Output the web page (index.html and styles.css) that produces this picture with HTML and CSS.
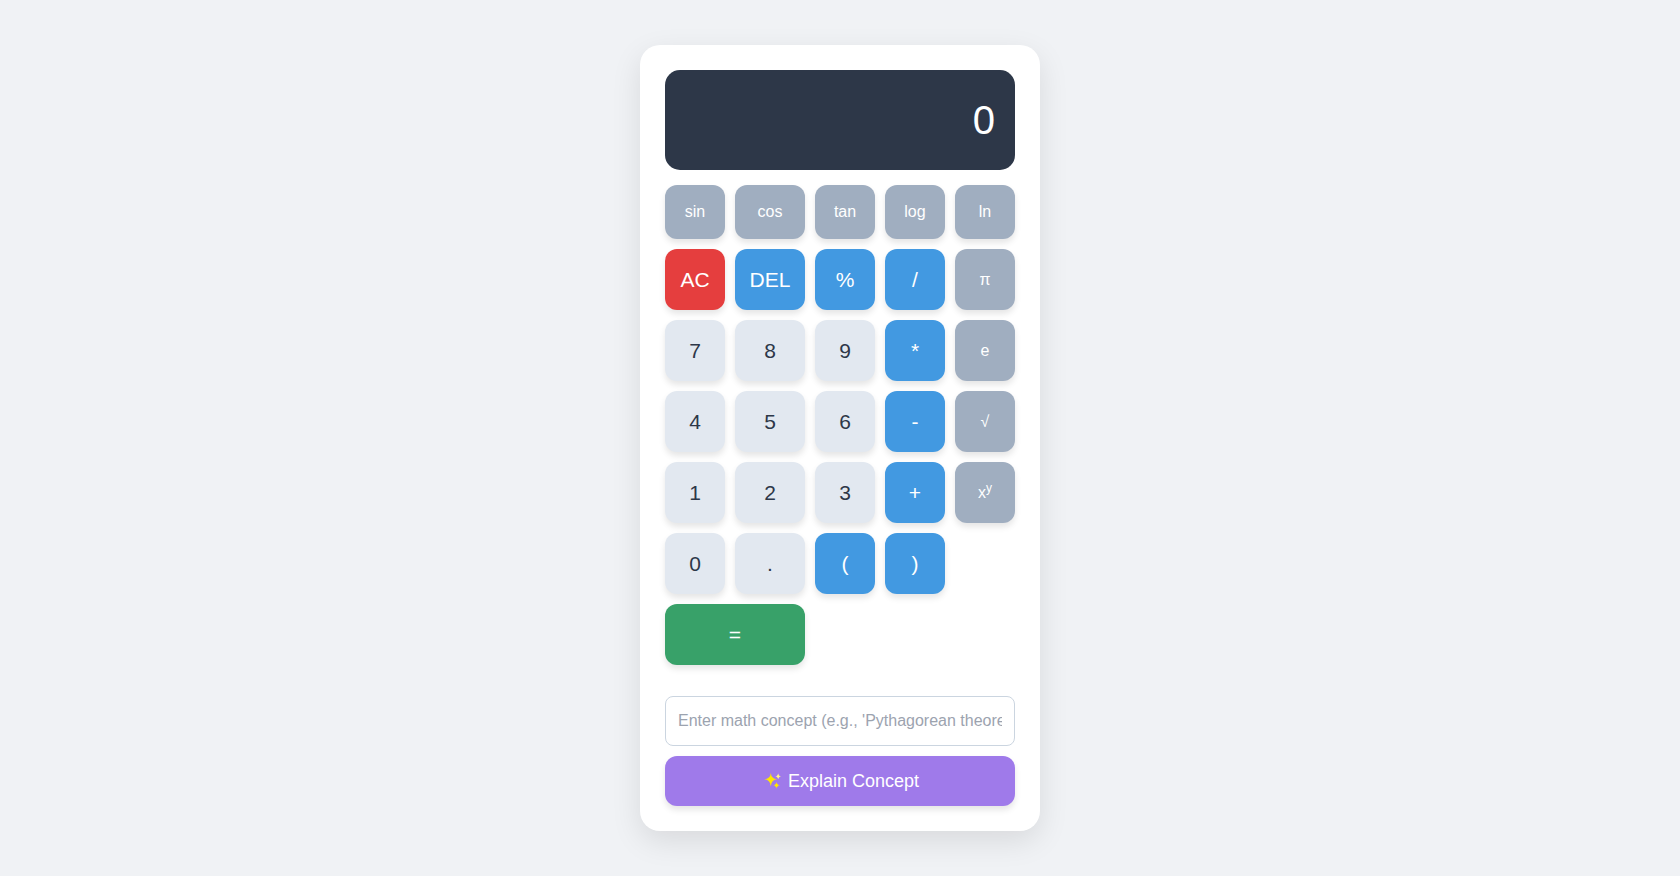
FILE: index.html
```html
<!DOCTYPE html>
<html lang="en">
<head>
<meta charset="utf-8">
<meta name="viewport" content="width=device-width, initial-scale=1">
<title>Scientific Calculator</title>
<link rel="stylesheet" href="styles.css">
</head>
<body>
<main class="calculator">
  <output class="display" aria-label="Result">0</output>
  <div class="keys">
    <button type="button" class="key function">sin</button>
    <button type="button" class="key function">cos</button>
    <button type="button" class="key function">tan</button>
    <button type="button" class="key function">log</button>
    <button type="button" class="key function">ln</button>

    <button type="button" class="key clear">AC</button>
    <button type="button" class="key operator">DEL</button>
    <button type="button" class="key operator">%</button>
    <button type="button" class="key operator">/</button>
    <button type="button" class="key function">π</button>

    <button type="button" class="key">7</button>
    <button type="button" class="key">8</button>
    <button type="button" class="key">9</button>
    <button type="button" class="key operator">*</button>
    <button type="button" class="key function">e</button>

    <button type="button" class="key">4</button>
    <button type="button" class="key">5</button>
    <button type="button" class="key">6</button>
    <button type="button" class="key operator">-</button>
    <button type="button" class="key function">√</button>

    <button type="button" class="key">1</button>
    <button type="button" class="key">2</button>
    <button type="button" class="key">3</button>
    <button type="button" class="key operator">+</button>
    <button type="button" class="key function">x<sup>y</sup></button>

    <button type="button" class="key">0</button>
    <button type="button" class="key">.</button>
    <button type="button" class="key operator">(</button>
    <button type="button" class="key operator">)</button>

    <button type="button" class="key equals">=</button>
  </div>
  <form class="explain">
    <input class="concept" type="text" aria-label="Math concept" placeholder="Enter math concept (e.g., 'Pythagorean theorem')">
    <button type="button" class="explain-button">
      <svg class="sparkles" viewBox="0 0 22 18" aria-hidden="true">
        <path fill="#ffe600" d="M9.8 1 Q10.3 6.8 16.2 7.3 Q10.3 7.8 9.8 14.2 Q9.3 7.8 3.2 7.3 Q9.3 6.8 9.8 1Z"/>
        <circle fill="#ffe600" cx="9.8" cy="7.3" r="2.4"/>
        <path fill="#fff08a" d="M17.2 1.4 Q17.5 4 20 4.3 Q17.5 4.6 17.2 7.2 Q16.9 4.6 14.4 4.3 Q16.9 4 17.2 1.4Z"/>
        <circle fill="#fff08a" cx="17.2" cy="4.3" r="1.2"/>
        <path fill="#ffe600" d="M15.5 10 Q15.8 13 19 13.3 Q15.8 13.6 15.5 16.7 Q15.2 13.6 12.1 13.3 Q15.2 13 15.5 10Z"/>
        <circle fill="#ffe600" cx="15.5" cy="13.3" r="1.5"/>
      </svg>
      <span>Explain Concept</span>
    </button>
  </form>
</main>
</body>
</html>
```
FILE: styles.css
```css
* {
  box-sizing: border-box;
}

body {
  display: flex;
  justify-content: center;
  align-items: center;
  min-height: 100vh;
  margin: 0;
  background: #f0f2f5;
  font-family: "Liberation Sans", Arial, sans-serif;
}

button,
input {
  font-family: inherit;
}

.calculator {
  display: flex;
  flex-direction: column;
  gap: 15px;
  width: 100%;
  max-width: 400px;
  padding: 25px;
  border-radius: 20px;
  background: #fff;
  box-shadow: 0 10px 30px rgba(0, 0, 0, 0.1);
}

.display {
  display: flex;
  justify-content: flex-end;
  align-items: center;
  min-height: 100px;
  padding: 20px;
  border-radius: 15px;
  background: #2d3748;
  color: #fff;
  font-size: 40px;
  overflow: hidden;
}

.keys {
  display: grid;
  grid-template-columns: 6fr 7fr 6fr 6fr 6fr;
  gap: 10px;
}

.key {
  padding: 18px 0;
  border: none;
  border-radius: 12px;
  background: #e2e8f0;
  color: #2d3748;
  font-size: 21px;
  line-height: 25px;
  box-shadow: 0 4px 6px rgba(0, 0, 0, 0.1);
  cursor: pointer;
}

.operator {
  background: #4299e1;
  color: #fff;
}

.function {
  background: #a0aec0;
  color: #fff;
  font-size: 16px;
  line-height: 18px;
}

.function sup {
  font-size: 12px;
  line-height: 0;
  vertical-align: 6px;
}

.clear {
  background: #e53e3e;
  color: #fff;
}

.equals {
  grid-column: span 2;
  background: #38a169;
  color: #fff;
}

.explain {
  display: flex;
  flex-direction: column;
  gap: 10px;
  margin-top: 16px;
}

.concept {
  width: 100%;
  height: 50px;
  padding: 12px;
  border: 1px solid #cbd5e0;
  border-radius: 8px;
  background: #fff;
  color: #2d3748;
  font-size: 16px;
}

.concept::placeholder {
  color: #9ca3af;
}

.explain-button {
  display: flex;
  justify-content: center;
  align-items: center;
  gap: 5px;
  padding: 15px;
  border: none;
  border-radius: 12px;
  background: #9f7aea;
  color: #fff;
  font-size: 18px;
  line-height: 20px;
  box-shadow: 0 4px 6px rgba(0, 0, 0, 0.1);
  cursor: pointer;
}

.sparkles {
  width: 22px;
  height: 18px;
}
```
